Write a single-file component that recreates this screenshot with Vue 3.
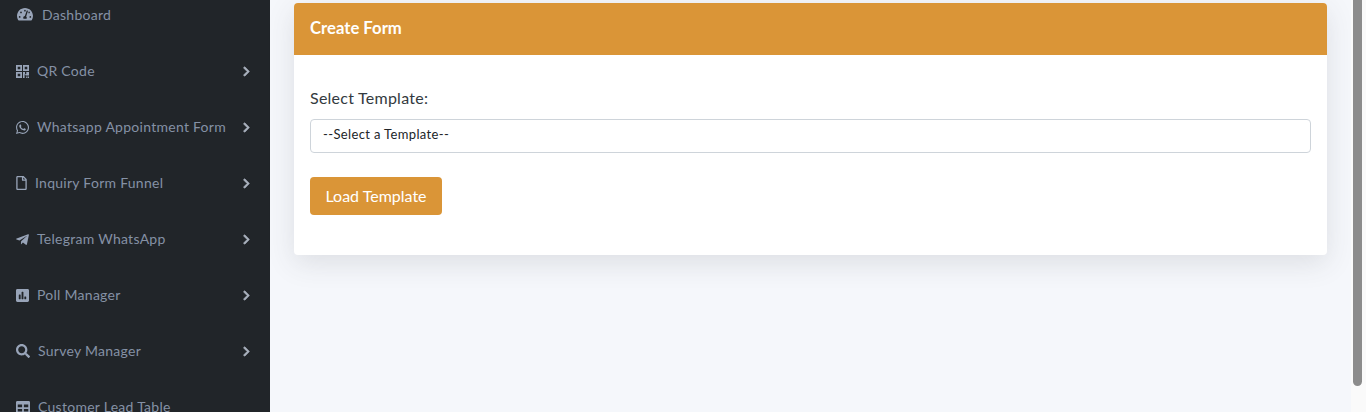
<script setup>
const items = [
  { label: 'Dashboard', icon: 'gauge', vb: '0 32 576 448', chevron: false, d: 'M288 32C128.94 32 0 160.94 0 320c0 52.8 14.25 102.26 39.06 144.8 5.61 9.62 16.3 15.2 27.44 15.2h443c11.14 0 21.83-5.58 27.44-15.2C561.75 422.26 576 372.8 576 320c0-159.06-128.94-288-288-288zm0 64c14.71 0 26.58 10.13 30.32 23.65-1.11 2.26-2.64 4.23-3.45 6.67l-9.22 27.67c-5.13 3.49-10.97 6.01-17.64 6.01-17.67 0-32-14.33-32-32S270.33 96 288 96zM96 384c-17.67 0-32-14.33-32-32s14.33-32 32-32 32 14.33 32 32-14.33 32-32 32zm48-160c-17.67 0-32-14.33-32-32s14.33-32 32-32 32 14.33 32 32-14.33 32-32 32zm246.77-72.41l-61.33 184C343.13 347.33 352 364.54 352 384c0 11.72-3.38 22.55-8.88 32H232.88c-5.5-9.45-8.88-20.28-8.88-32 0-33.94 26.5-61.43 59.9-63.59l61.34-184.01c4.17-12.56 17.73-19.45 30.36-15.17 12.57 4.19 19.35 17.79 15.17 30.36zm14.66 57.2l15.52-46.55c3.47-1.29 7.13-2.23 11.05-2.23 17.67 0 32 14.33 32 32s-14.33 32-32 32c-11.38-.01-20.89-6.28-26.57-15.22zM480 384c-17.67 0-32-14.33-32-32s14.33-32 32-32 32 14.33 32 32-14.33 32-32 32z' },
  { label: 'QR Code', icon: 'qr', vb: '0 0 13 13', chevron: true, d: 'M0 0h6v6H0zM1.7 1.7v2.6h2.6V1.7zM7 0h6v6H7zM8.7 1.7v2.6h2.6V1.7zM0 7h6v6H0zM1.7 8.7v2.6h2.6V8.7zM7 7h2v2h1.3V7H13v3.6H9.6V9.4H8.6V13H7zM10.2 11.6h1.2V13h-1.2zM11.9 11.6H13V13h-1.1z' },
  { label: 'Whatsapp Appointment Form', icon: 'wa', vb: '0 32 448 448', chevron: true, d: 'M380.9 97.1C339 55.1 283.2 32 223.9 32c-122.4 0-222 99.6-222 222 0 39.1 10.2 77.3 29.6 111L0 480l117.7-30.9c32.4 17.7 68.9 27 106.1 27h.1c122.3 0 224.1-99.6 224.1-222 0-59.3-25.2-115-67.1-157zm-157 341.6c-33.2 0-65.7-8.9-94-25.7l-6.7-4-69.8 18.3L72 359.2l-4.4-7c-18.5-29.4-28.2-63.3-28.2-98.2 0-101.7 82.8-184.5 184.6-184.5 49.3 0 95.6 19.2 130.4 54.1 34.8 34.9 56.2 81.2 56.1 130.5 0 101.8-84.9 184.6-186.6 184.6zm101.2-138.2c-5.5-2.8-32.8-16.2-37.9-18-5.1-1.9-8.8-2.8-12.5 2.8-3.7 5.6-14.3 18-17.6 21.8-3.2 3.7-6.5 4.2-12 1.4-32.6-16.3-54-29.1-75.5-66-5.7-9.8 5.7-9.1 16.3-30.3 1.8-3.7.9-6.9-.5-9.7-1.4-2.8-12.5-30.1-17.1-41.2-4.5-10.8-9.1-9.3-12.5-9.5-3.2-.2-6.9-.2-10.6-.2-3.7 0-9.7 1.4-14.8 6.9-5.1 5.6-19.4 19-19.4 46.3 0 27.3 19.9 53.7 22.6 57.4 2.8 3.7 39.1 59.7 94.8 83.8 35.2 15.2 49 16.5 66.6 13.9 10.7-1.6 32.8-13.4 37.4-26.4 4.6-13 4.6-24.1 3.2-26.4-1.3-2.5-5-3.9-10.5-6.6z' },
  { label: 'Inquiry Form Funnel', icon: 'file', vb: '0 0 384 512', chevron: true, d: 'M369.9 97.9L286 14C277 5 264.8-.1 252.1-.1H48C21.5 0 0 21.5 0 48v416c0 26.5 21.5 48 48 48h288c26.5 0 48-21.5 48-48V131.9c0-12.7-5.1-25-14.1-34zM332.1 128H256V51.9l76.1 76.1zM48 464V48h160v104c0 13.3 10.7 24 24 24h104v288H48z' },
  { label: 'Telegram WhatsApp', icon: 'plane', vb: '0 60 448 384', chevron: true, d: 'M446.7 98.6l-67.6 318.8c-5.1 22.5-18.4 28.1-37.3 17.5l-103-75.9-49.7 47.8c-5.5 5.5-10.1 10.1-20.7 10.1l7.4-104.9 190.9-172.5c8.3-7.4-1.8-11.5-12.9-4.1L117.8 284 16.2 252.2c-22.1-6.9-22.5-22.1 4.6-32.7L418.2 66.4c18.4-6.9 34.5 4.1 28.5 32.2z' },
  { label: 'Poll Manager', icon: 'poll', vb: '0 32 448 448', chevron: true, d: 'M400 32H48C21.5 32 0 53.5 0 80v352c0 26.5 21.5 48 48 48h352c26.5 0 48-21.5 48-48V80c0-26.5-21.5-48-48-48zM160 368c0 8.84-7.16 16-16 16h-32c-8.84 0-16-7.16-16-16V240c0-8.84 7.16-16 16-16h32c8.84 0 16 7.16 16 16v128zm96 0c0 8.84-7.16 16-16 16h-32c-8.84 0-16-7.16-16-16V144c0-8.84 7.16-16 16-16h32c8.84 0 16 7.16 16 16v224zm96 0c0 8.84-7.16 16-16 16h-32c-8.84 0-16-7.16-16-16v-64c0-8.84 7.16-16 16-16h32c8.84 0 16 7.16 16 16v64z' },
  { label: 'Survey Manager', icon: 'search', vb: '0 0 512 512', chevron: true, d: 'M505 442.7L405.3 343c-4.5-4.5-10.6-7-17-7H372c27.6-35.3 44-79.7 44-128C416 93.1 322.9 0 208 0S0 93.1 0 208s93.1 208 208 208c48.3 0 92.7-16.4 128-44v16.3c0 6.4 2.5 12.5 7 17l99.7 99.7c9.4 9.4 24.6 9.4 33.9 0l28.3-28.3c9.4-9.4 9.4-24.6.1-34zM208 336c-70.7 0-128-57.2-128-128 0-70.7 57.2-128 128-128 70.7 0 128 57.2 128 128 0 70.7-57.2 128-128 128z' },
  { label: 'Customer Lead Table', icon: 'table', vb: '0 32 512 448', chevron: false, d: 'M464 32H48C21.49 32 0 53.49 0 80v352c0 26.51 21.49 48 48 48h416c26.51 0 48-21.49 48-48V80c0-26.51-21.49-48-48-48zM224 416H64v-96h160v96zm0-160H64v-96h160v96zm224 160H288v-96h160v96zm0-160H288v-96h160v96z' }
]
const chevron = 'M285.476 272.971L91.132 467.314c-9.373 9.373-24.569 9.373-33.941 0l-22.667-22.667c-9.357-9.357-9.375-24.522-.04-33.901L188.505 256 34.484 101.255c-9.335-9.379-9.317-24.544.04-33.901l22.667-22.667c9.373-9.373 24.569-9.373 33.941 0L285.475 239.03c9.373 9.372 9.373 24.568.001 33.941z'
</script>

<template>
  <div class="page">
    <aside class="sidebar">
      <nav class="nav">
        <a v-for="it in items" :key="it.label" class="row" :class="'row-' + it.icon">
          <svg class="icon" :viewBox="it.vb"><path :d="it.d" fill-rule="evenodd" /></svg>
          <span class="label">{{ it.label }}</span>
          <svg v-if="it.chevron" class="chev" viewBox="0 0 320 512"><path :d="chevron" /></svg>
        </a>
      </nav>
    </aside>
    <main class="main">
      <section class="card">
        <header class="card-head">Create Form</header>
        <div class="card-body">
          <label class="field-label">Select Template:</label>
          <div class="select">--Select a Template--</div>
          <button class="btn" type="button">Load Template</button>
        </div>
      </section>
    </main>
    <div class="scrollbar"><div class="thumb"></div></div>
  </div>
</template>

<style>
html, body { margin: 0; overflow: hidden; }
</style>

<style scoped>
.page {
  display: flex;
  width: 1366px;
  height: 412px;
  overflow: hidden;
  background: #f5f7fb;
  font-family: "Lato", "Open Sans", sans-serif;
}
.sidebar {
  width: 270px;
  flex: none;
  background: #212529;
  overflow: hidden;
}
.nav { margin-top: -13px; }
.row {
  display: flex;
  align-items: center;
  height: 56px;
  padding-left: 16px;
  color: #8591a5;
  font-size: 14px;
  letter-spacing: 0.27px;
}
.icon { height: 13px; width: 13px; flex: none; fill: #98a4b8; margin-right: 8px; }
.label { flex: 1; white-space: nowrap; margin-bottom: 2px; }
.chev { width: 9px; height: 11px; fill: #a9b1bd; stroke: #a9b1bd; stroke-width: 30; margin-right: 19px; flex: none; }
.row-gauge .icon { width: 16px; height: 12.5px; margin-left: 1px; margin-right: 8px; margin-bottom: 1px; }
.row-gauge .label { margin-left: 1px; }
.row-file .icon { width: 11px; height: 14px; }
.row-plane .icon { width: 13px; height: 11px; }
.row-search .icon { width: 14px; height: 14px; margin-right: 8px; }
.row-table .icon { width: 14px; height: 12.25px; margin-right: 8px; }
.main {
  flex: 1;
  min-width: 0;
  padding: 3px 24px 0;
}
.card {
  background: #fff;
  border-radius: 4px;
  overflow: hidden;
  box-shadow: 0 8px 28px rgba(58, 59, 69, 0.13);
  height: 252px;
}
.card-head {
  box-sizing: border-box;
  height: 52px;
  display: flex;
  align-items: center;
  padding: 0 16px 2px;
  background: #da9537;
  color: #fff;
  font-weight: 700;
  font-size: 16.7px;
}
.card-body {
  padding: 32px 16px 0;
  display: flex;
  flex-direction: column;
  align-items: flex-start;
}
.field-label {
  color: #333a40;
  font-size: 16px;
  line-height: 22px;
  margin-bottom: 10px;
  letter-spacing: 0.25px;
}
.select {
  box-sizing: border-box;
  width: 100%;
  height: 34px;
  line-height: 29px;
  border: 1px solid #ced4da;
  border-radius: 4px;
  padding: 0 12px;
  color: #212529;
  font-size: 13px;
  letter-spacing: 0.36px;
  background: #fff;
}
.btn {
  margin-top: 24px;
  height: 38px;
  width: 132px;
  border: none;
  border-radius: 4px;
  background: #da9537;
  color: #fff;
  font-family: inherit;
  font-size: 16px;
  padding: 0 0 2px;
}
.scrollbar {
  flex: none;
  width: 15px;
  background: #fafafa;
  display: flex;
  justify-content: center;
}
.thumb {
  width: 9px;
  height: 386px;
  margin-right: 3px;
  background: #8c8c8c;
  border-radius: 0 0 5px 5px;
}
</style>
